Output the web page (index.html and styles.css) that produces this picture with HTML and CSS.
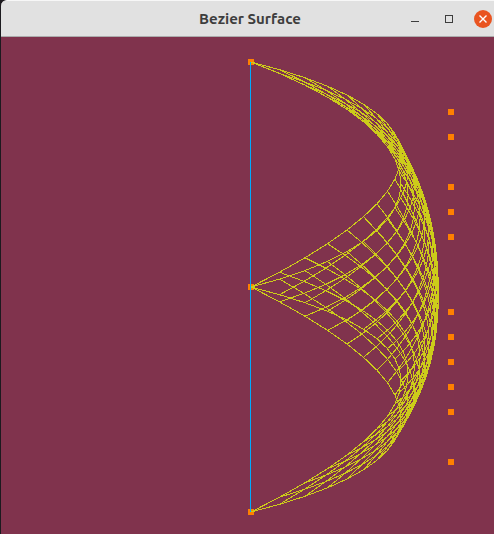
FILE: index.html
```html
<!DOCTYPE html>
<html lang="en">
<head>
<meta charset="utf-8">
<title>Bezier Surface</title>
<link rel="stylesheet" href="styles.css">
</head>
<body>
<main class="window">
  <header class="titlebar">
    <h1 class="title">Bezier Surface</h1>
    <div class="controls">
      <button class="control" type="button" aria-label="Minimize">
        <svg width="18" height="18" viewBox="0 0 18 18" shape-rendering="crispEdges"><rect x="5" y="11" width="8" height="1" fill="#3d3d3d"/></svg>
      </button>
      <button class="control" type="button" aria-label="Maximize">
        <svg width="18" height="18" viewBox="0 0 18 18"><rect x="5.5" y="5.5" width="7" height="7" fill="none" stroke="#3d3d3d"/></svg>
      </button>
      <button class="control close" type="button" aria-label="Close">
        <svg width="18" height="18" viewBox="0 0 18 18"><path d="M5.5 5.5l7 7M12.5 5.5l-7 7" fill="none" stroke="#fff" stroke-width="1.4"/></svg>
      </button>
    </div>
  </header>
  <section class="viewport">
    <svg id="scene" class="scene" width="493" height="497" role="img" aria-label="Wireframe of a Bezier surface with its control points"></svg>
  </section>
</main>
<script src="surface.js"></script>
</body>
</html>
```
FILE: styles.css
```css
* {
  box-sizing: border-box;
}

body {
  margin: 0;
  background: #1c1a1f;
  font-family: Ubuntu, "Noto Sans", sans-serif;
}

.window {
  display: flex;
  flex-direction: column;
  min-height: 100vh;
  margin-left: 1px;
}

.titlebar {
  display: grid;
  grid-template-columns: 1fr auto 1fr;
  align-items: center;
  height: 37px;
  padding: 0 2px 0 7px;
  background: #e1e1e1;
  border-top: 1px solid #f7f7f7;
  border-bottom: 1px solid #acacac;
  border-top-left-radius: 6px;
}

.title {
  grid-column: 2;
  margin: 0;
  color: #3d3d3d;
  font-size: 15px;
  font-weight: 700;
  line-height: 20px;
}

.controls {
  display: flex;
  justify-content: flex-end;
  gap: 16px;
}

.control {
  display: block;
  width: 18px;
  height: 18px;
  padding: 0;
  border: 0;
  border-radius: 50%;
  background: transparent;
}

.control svg {
  display: block;
}

.close {
  background: #e95420;
}

.viewport {
  flex: 1;
  overflow: hidden;
  background: #80334d;
}

.scene {
  display: block;
}

.mesh {
  fill: none;
  stroke: #cccc1a;
  stroke-width: 1px;
  shape-rendering: crispEdges;
}

.point {
  fill: #ff8000;
}

.axis {
  fill: #00aaff;
}
```
FILE: surface.js
```js
// Heights of the 4x4 control net; the corners lie on the axis, the rest one reach away.
const heights = [
  [9, 7, 4, 0],
  [6, 3, -1, -2],
  [2, -1, -3, -5],
  [0, -4, -7, -9]
];
const origin = { x: 250, y: 250 };
const reach = 200;
const unit = 25;
const steps = 20;
const scene = document.getElementById("scene");

function add(name, attributes) {
  const node = document.createElementNS("http://www.w3.org/2000/svg", name);
  for (const key in attributes) node.setAttribute(key, attributes[key]);
  scene.appendChild(node);
}

function basis(t) {
  const s = 1 - t;
  return [s * s * s, 3 * t * s * s, 3 * t * t * s, t * t * t];
}

function controlX(i, j) {
  return i % 3 === 0 && j % 3 === 0 ? 0 : reach;
}

function surface(u, v) {
  const a = basis(u);
  const b = basis(v);
  let x = origin.x;
  let y = origin.y;
  for (let i = 0; i < 4; i++) {
    for (let j = 0; j < 4; j++) {
      x += a[i] * b[j] * controlX(i, j);
      y -= a[i] * b[j] * heights[i][j] * unit;
    }
  }
  return x.toFixed(2) + "," + y.toFixed(2);
}

heights.forEach((row, i) => row.forEach((h, j) => {
  add("rect", {
    class: "point",
    x: origin.x + controlX(i, j) - 3,
    y: origin.y - h * unit - 3,
    width: 6,
    height: 6
  });
}));

for (let i = 0; i <= steps; i++) {
  const along = [];
  const across = [];
  for (let j = 0; j <= steps; j++) {
    along.push(surface(i / steps, j / steps));
    across.push(surface(j / steps, i / steps));
  }
  add("polyline", { class: "mesh", points: along.join(" ") });
  add("polyline", { class: "mesh", points: across.join(" ") });
}

add("rect", { class: "axis", x: origin.x - 1, y: origin.y - 9 * unit, width: 1, height: 18 * unit });
```
